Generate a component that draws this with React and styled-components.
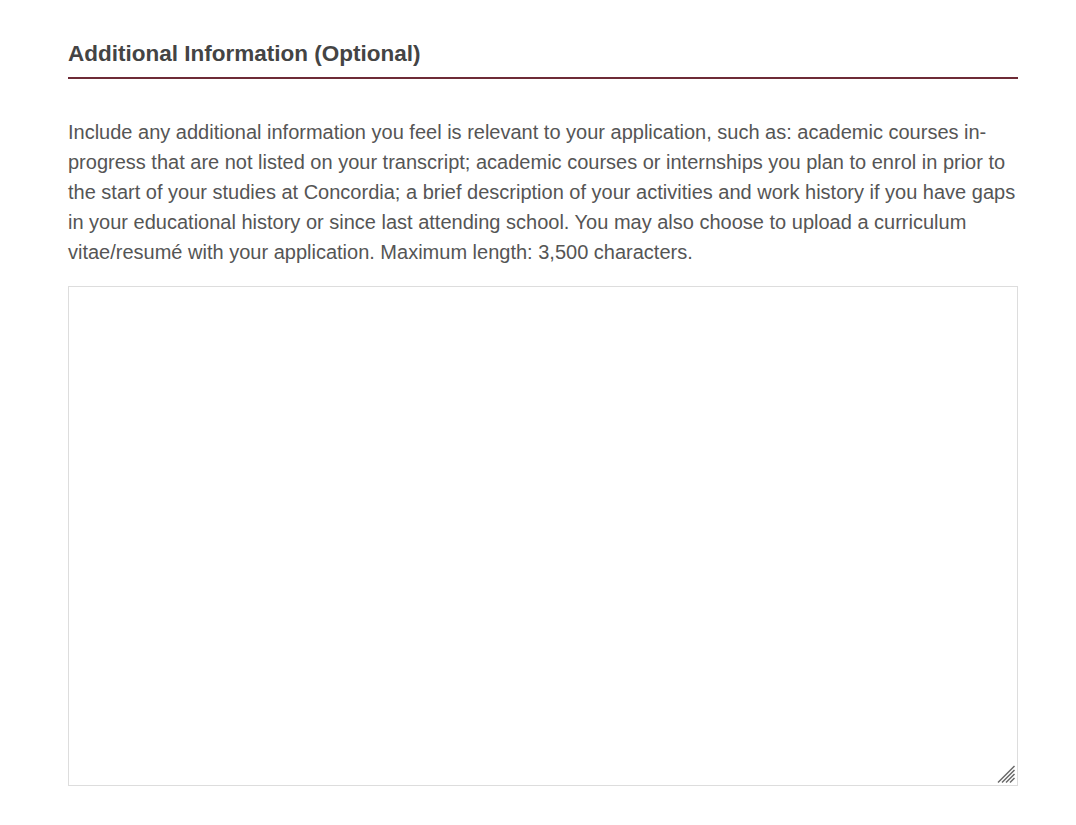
import React from 'react';
import styled, { createGlobalStyle } from 'styled-components';

const GlobalStyle = createGlobalStyle`
  html, body {
    margin: 0;
    padding: 0;
    background: #fff;
  }
  body {
    font-family: "Liberation Sans", Arial, sans-serif;
  }
`;

const Section = styled.section`
  width: 950px;
  padding: 39px 0 0 68px;
`;

const Heading = styled.h2`
  margin: 0;
  padding-bottom: 8px;
  font-size: 22.5px;
  font-weight: 700;
  line-height: 30px;
  color: #444;
  border-bottom: 2px solid #6e2b36;
`;

const Intro = styled.p`
  margin: 38px 0 0;
  font-size: 20px;
  line-height: 30px;
  color: #555;
`;

const FieldWrap = styled.div`
  position: relative;
  margin-top: 19px;
`;

const TextArea = styled.textarea`
  display: block;
  box-sizing: border-box;
  width: 950px;
  height: 500px;
  border: 1px solid #ddd;
  padding: 8px;
  font-family: inherit;
  font-size: 16px;
  color: #444;
  resize: none;
  outline: none;
`;

const Grip = styled.svg`
  position: absolute;
  right: 3px;
  bottom: 3px;
  pointer-events: none;
`;

const ResizeGrip = () => (
  <Grip width="18" height="18" viewBox="0 0 18 18" aria-hidden="true">
    <g stroke="#666" strokeWidth="1.4" strokeLinecap="square">
      <line x1="1.5" y1="17" x2="17" y2="1.5" />
      <line x1="5.5" y1="17" x2="17" y2="5.5" />
      <line x1="9.5" y1="17" x2="17" y2="9.5" />
      <line x1="13.5" y1="17" x2="17" y2="13.5" />
    </g>
  </Grip>
);

export default function App() {
  return (
    <>
      <GlobalStyle />
      <Section>
        <Heading>Additional Information (Optional)</Heading>
        <Intro>
          Include any additional information you feel is relevant to your application, such as: academic courses in-progress that are not listed on your transcript; academic courses or internships you plan to enrol in prior to the start of your studies at Concordia; a brief description of your activities and work history if you have gaps in your educational history or since last attending school. You may also choose to upload a curriculum vitae/resumé with your application. Maximum length: 3,500 characters.
        </Intro>
        <FieldWrap>
          <TextArea aria-label="Additional information" />
          <ResizeGrip />
        </FieldWrap>
      </Section>
    </>
  );
}
